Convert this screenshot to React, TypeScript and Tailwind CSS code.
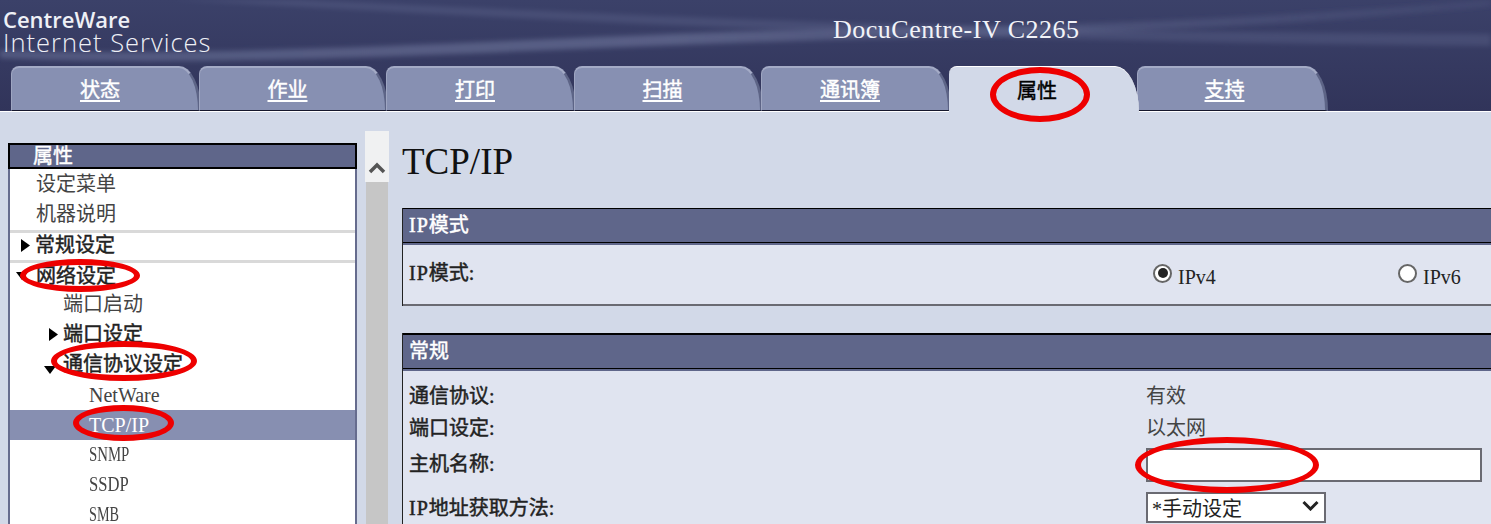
import type { ReactNode } from 'react';

const TABS = [
  { label: '状态', width: 'w-[190px] -mr-[2px] pr-[10px]' },
  { label: '作业', width: 'w-[189px] -mr-[2px] pr-[10px]' },
  { label: '打印', width: 'w-[190px] -mr-[2px] pr-[10px]' },
  { label: '扫描', width: 'w-[189px] -mr-[2px] pr-[10px]' },
  { label: '通讯簿', width: 'w-[190px] -mr-[2px] pr-[10px]' },
  { label: '属性', width: 'w-[190px] -mr-[2px] pr-[14px]', active: true },
  { label: '支持', width: 'w-[191px] pr-[14px]' },
];

const SEMI = '[-webkit-text-stroke:0.45px_currentColor]';

// latin text, half as wide as the CJK glyphs around it
function L({ children, className = '' }: { children: ReactNode; className?: string }) {
  return <span className={`inline-block font-['Liberation_Serif',serif] ${className}`}>{children}</span>;
}

function CaretRight() {
  return (
    <svg width="9" height="13" viewBox="0 0 9 13" className="shrink-0">
      <path d="M0 0 L9 6.5 L0 13 Z" fill="#000" />
    </svg>
  );
}

function CaretDown({ className = '' }: { className?: string }) {
  return (
    <svg width="12" height="8" viewBox="0 0 12 8" className={`shrink-0 ${className}`}>
      <path d="M0 0 L12 0 L6 8 Z" fill="#000" />
    </svg>
  );
}

function Ring({ className }: { className: string }) {
  return <div className={`absolute z-20 rounded-[50%] border-[6px] border-[#ee0000] ${className}`} />;
}

function HeaderArt() {
  return (
    <svg className="absolute inset-0 h-full w-full" viewBox="0 0 1491 111" preserveAspectRatio="none">
      <defs>
        <linearGradient id="sw" x1="0" x2="1" y1="0" y2="0">
          <stop offset="0" stopColor="#6a7299" stopOpacity="0.55" />
          <stop offset="0.45" stopColor="#7b83a8" stopOpacity="0.5" />
          <stop offset="1" stopColor="#5a6189" stopOpacity="0.25" />
        </linearGradient>
        <filter id="bl"><feGaussianBlur stdDeviation="2.5" /></filter>
      </defs>
      <path d="M0 58 C250 70 600 44 900 38 C1150 34 1350 20 1491 6 L1491 0 C1300 16 1100 26 880 28 C600 32 250 60 0 50 Z" fill="url(#sw)" filter="url(#bl)" />
      <path d="M170 0 C400 10 800 40 1491 46 L1491 34 C900 32 500 8 300 0 Z" fill="#6a7299" opacity="0.3" filter="url(#bl)" />
    </svg>
  );
}

export default function App() {
  return (
    <div className="relative h-[524px] w-[1491px] overflow-hidden bg-[#d2d9e8] font-['Liberation_Serif','Noto_Sans_CJK_SC',serif] text-[20px] leading-[30px] text-[#222]">
      <header className="relative h-[112px] border-b border-b-white bg-gradient-to-b from-[#3b4169] to-[#31345a]">
        <HeaderArt />
        <div className="absolute left-[3px] top-[9px] font-['Open_Sans',sans-serif] text-[#eef0f6]">
          <div className="text-[22px] font-semibold leading-[21px]">CentreWare</div>
          <div className="text-[25.5px] font-light leading-[24px] tracking-[1px]">Internet Services</div>
        </div>
        <div className="absolute left-[833px] top-[15px] text-[26px] leading-[30px] tracking-[0.5px] text-[#f2f3f8]">DocuCentre-IV C2265</div>
        <nav className="absolute bottom-0 left-[11px] flex h-[45px]">
          {TABS.map((t) =>
            t.active ? (
              <div key={t.label} className={`${t.width} relative z-10 -mb-[1px] flex items-center justify-center rounded-tl-[8px] rounded-tr-[24px_46px] border-t border-t-white bg-[#d2d9e8] pt-[2px] text-black ${SEMI}`}>
                {t.label}
              </div>
            ) : (
              <div key={t.label} className={`${t.width} flex items-center justify-center rounded-tl-[8px] rounded-tr-[22px_44px] border-t-2 border-r-[3px] border-b border-l border-t-[#a4abc6] border-r-[#5d6486] border-b-[#15172c] border-l-[#9ea5c1] bg-[#8790b2] pt-[2px] text-white underline underline-offset-[3px] ${SEMI}`}>
                {t.label}
              </div>
            ),
          )}
        </nav>
      </header>

      <div className="flex h-[412px]">
        <aside className="ml-[8px] mt-[31px] w-[349px] shrink-0">
          <div className={`h-[26px] border-2 border-black bg-[#5f668a] pl-[23px] leading-[22px] text-white ${SEMI}`}>属性</div>
          <div className="h-[400px] border-x-2 border-x-[#666c8e] bg-white pt-[1px]">
            <div className="flex h-[30px] items-center pb-[2px] pl-[26px] text-[#444]">设定菜单</div>
            <div className="flex h-[30px] items-center pb-[2px] pl-[26px] text-[#444]">机器说明</div>
            <div className={`flex h-[33px] items-center border-y-[3px] border-y-[#d9d9d9] pb-[3px] pl-[11px] ${SEMI}`}>
              <CaretRight />
              <span className="ml-[5px]">常规设定</span>
            </div>
            <div className={`flex h-[27px] items-center pb-[1px] pl-[6px] ${SEMI}`}>
              <CaretDown />
              <span className="ml-[8px]">网络设定</span>
            </div>
            <div className="flex h-[30px] items-center pb-[2px] pl-[53px] text-[#444]">端口启动</div>
            <div className={`flex h-[30px] items-center pb-[2px] pl-[39px] ${SEMI}`}>
              <CaretRight />
              <span className="ml-[5px]">端口设定</span>
            </div>
            <div className={`flex h-[30px] items-center pb-[2px] pl-[34px] ${SEMI}`}>
              <CaretDown className="mt-[12px]" />
              <span className="ml-[7px]">通信协议设定</span>
            </div>
            <div className="flex h-[30px] items-center pb-[1px] pl-[79px] text-[#444]">NetWare</div>
            <div className="flex h-[30px] items-center bg-[#878fb1] pb-[1px] pl-[79px] text-white">TCP/IP</div>
            <div className="flex h-[30px] items-center pb-[3px] pl-[79px] text-[#444]"><L className="origin-left scale-x-[0.74]">SNMP</L></div>
            <div className="flex h-[30px] items-center pb-[3px] pl-[79px] text-[#444]"><L className="origin-left scale-x-[0.83]">SSDP</L></div>
            <div className="flex h-[30px] items-center pb-[3px] pl-[79px] text-[#444]"><L className="origin-left scale-x-[0.71]">SMB</L></div>
          </div>
        </aside>

        <div className="ml-[8px] mt-[19px] w-[24px] shrink-0">
          <div className="flex h-[51px] items-end justify-center bg-[#f0f1f2] pb-[8px]">
            <svg width="18" height="12" viewBox="0 0 18 12">
              <path d="M2 10 L9 3 L16 10" fill="none" stroke="#555" strokeWidth="3.5" />
            </svg>
          </div>
          <div className="mx-[1px] h-[400px] bg-[#c6c6c6]" />
        </div>

        <main className="ml-[13px] w-[1100px] shrink-0">
          <h1 className="mt-[28px] h-[68px] text-[37px] font-normal leading-[44px] text-[#111]">TCP/IP</h1>

          <section className="border-l border-l-[#222]">
            <div className={`h-[35px] border-y border-y-black bg-[#5f668a] pl-[6px] leading-[32px] text-white ${SEMI}`}>
              <span className="tracking-[1px]">IP</span>模式
            </div>
            <div className="flex h-[63px] items-center border-b-2 border-b-[#6a6a72] border-t-2 border-t-[#5f668a] bg-[#e0e4f0] pl-[6px]">
              <div className={`w-[744px] pb-[4px] ${SEMI}`}><span className="tracking-[1px]">IP</span>模式:</div>
              <div className="flex w-[245px] items-center">
                <span className="mt-[-3px] flex h-[19px] w-[19px] items-center justify-center rounded-full border-2 border-[#666] bg-white">
                  <span className="h-[10px] w-[10px] rounded-full bg-[#222]" />
                </span>
                <span className="ml-[6px] mt-[4px]">IPv4</span>
              </div>
              <div className="flex items-center">
                <span className="mt-[-3px] h-[19px] w-[19px] rounded-full border-2 border-[#666] bg-white" />
                <span className="ml-[6px] mt-[4px]">IPv6</span>
              </div>
            </div>
          </section>

          <section className="mt-[27px] border-l border-l-[#222]">
            <div className={`h-[36px] border-t-2 border-b border-t-black border-b-black bg-[#5f668a] pl-[6px] leading-[33px] text-white ${SEMI}`}>常规</div>
            <div className="h-[200px] border-t-2 border-t-[#5f668a] bg-[#e0e4f0] pl-[6px] pt-[10px]">
              <div className="flex h-[32px] items-center pb-[2px]">
                <div className={`w-[737px] ${SEMI}`}>通信协议:</div>
                <div className="text-[#444]">有效</div>
              </div>
              <div className="flex h-[32px] items-center pb-[2px]">
                <div className={`w-[737px] ${SEMI}`}>端口设定:</div>
                <div className="text-[#444]">以太网</div>
              </div>
              <div className="mt-[3px] flex h-[34px] items-center">
                <div className={`w-[737px] pb-[2px] ${SEMI}`}>主机名称:</div>
                <input className="h-[34px] w-[336px] border-2 border-[#6a6a72] bg-white" />
              </div>
              <div className="mt-[10px] flex h-[31px] items-center">
                <div className={`w-[737px] ${SEMI}`}><span className="tracking-[1px]">IP</span>地址获取方法:</div>
                <div className="flex h-[31px] w-[180px] items-center justify-between border-2 border-[#6a6a72] bg-white pl-[4px] pr-[5px] text-[#222]">
                  <span className="pt-[2px]">*手动设定</span>
                  <svg width="17" height="11" viewBox="0 0 17 11" className="mb-[4px]">
                    <path d="M1.5 2 L8.5 9 L15.5 2" fill="none" stroke="#222" strokeWidth="3" />
                  </svg>
                </div>
              </div>
            </div>
          </section>
        </main>
      </div>

      <Ring className="left-[990px] top-[67px] h-[55px] w-[100px]" />
      <Ring className="left-[20px] top-[259px] h-[33px] w-[120px]" />
      <Ring className="left-[51px] top-[341px] h-[40px] w-[146px]" />
      <Ring className="left-[73px] top-[405px] h-[36px] w-[101px]" />
      <Ring className="left-[1135px] top-[437px] h-[56px] w-[184px]" />
    </div>
  );
}
